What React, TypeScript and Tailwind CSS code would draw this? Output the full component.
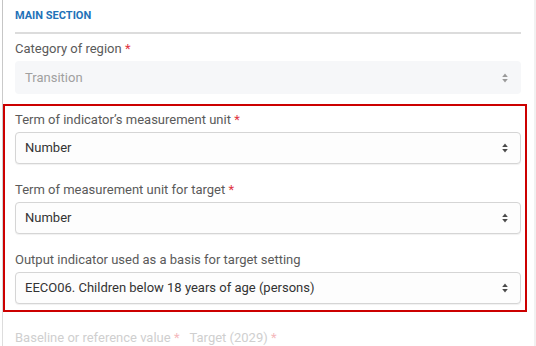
import React from 'react'

function Arrows({ muted = false }: { muted?: boolean }) {
  const fill = muted ? '#9a9a9a' : '#4a4a4a'
  return (
    <svg width="6" height="10" viewBox="0 0 6 10" className="shrink-0">
      <path d="M3 0.5 L5.8 4 H0.2 Z" fill={fill} />
      <path d="M3 9.5 L5.8 6 H0.2 Z" fill={fill} />
    </svg>
  )
}

function Label({ text, required = false }: { text: string; required?: boolean }) {
  return (
    <div className="text-[13px] leading-[20px] text-[#5a5a5a] mb-[2px]">
      {text}
      {required && <span className="text-[#e0343f]"> *</span>}
    </div>
  )
}

function Select({ value, disabled = false }: { value: string; disabled?: boolean }) {
  if (disabled) {
    return (
      <div className="h-[33px] rounded-[4px] bg-[#f6f7f9] flex items-center justify-between pl-[10px] pr-[13px] text-[13px] text-[#a0a0a0]">
        <span>{value}</span>
        <Arrows muted />
      </div>
    )
  }
  return (
    <div className="h-[32px] rounded-[4px] border border-[#d5d5d5] bg-[#fdfdfd] shadow-[0_1px_1px_rgba(0,0,0,0.06)] flex items-center justify-between pl-[9px] pr-[12px] text-[13px] text-[#333]">
      <span>{value}</span>
      <Arrows />
    </div>
  )
}

export default function App() {
  return (
    <div className="w-[536px] h-[346px] overflow-hidden bg-white flex font-['Roboto',sans-serif]">
      <div className="w-[2px] shrink-0" />
      <div className="w-[1px] shrink-0 bg-gradient-to-b from-[#c4c4c4] to-[#dedede]" />
      <div className="flex-1 pl-[12px] pr-[13px]">
        <div className="pt-[9px] pb-[9px] border-b-2 border-[#dcdcdc] text-[11px] leading-[14px] font-bold text-[#1f72b8]">
          MAIN SECTION
        </div>
        <div className="mt-[5px]">
          <Label text="Category of region" required />
          <Select value="Transition" disabled />
        </div>
        <div className="mt-[10px] -ml-[12px] -mr-[6px] border-2 border-[#cc0000] pl-[10px] pr-[4px] pt-[4px] pb-[6px] flex flex-col gap-[16px]">
          <div>
            <Label text="Term of indicator’s measurement unit" required />
            <Select value="Number" />
          </div>
          <div>
            <Label text="Term of measurement unit for target" required />
            <Select value="Number" />
          </div>
          <div>
            <Label text="Output indicator used as a basis for target setting" />
            <Select value="EECO06. Children below 18 years of age (persons)" />
          </div>
        </div>
        <div className="mt-[16px] flex gap-[10px] text-[13px] leading-[20px] text-[#cfcfcf]">
          <span>
            Baseline or reference value<span className="text-[#f4b8bc]"> *</span>
          </span>
          <span>
            Target (2029)<span className="text-[#f4b8bc]"> *</span>
          </span>
        </div>
      </div>
      <div className="w-[2px] shrink-0 bg-[#f1f1f1]" />
    </div>
  )
}
